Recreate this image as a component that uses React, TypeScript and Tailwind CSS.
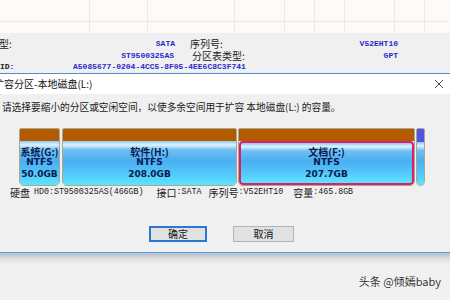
import React from "react";

const CJK = "font-['Noto_Sans_CJK_SC','Noto_Sans',sans-serif]";
const MONO = "font-['Liberation_Mono','DejaVu_Sans_Mono',monospace]";

const blueFill =
  "bg-[linear-gradient(to_bottom,#8ccaf2_0%,#dff3ff_9%,#6fbff4_20%,#4aaef2_45%,#52c6f9_72%,#5ce4ff_100%)]";

function PartText({ name, fs, size }: { name: string; fs: string; size: string }) {
  return (
    <div className="flex flex-col items-center justify-center leading-[11.5px] text-[#0b1a4e]">
      <span className={`${CJK} text-[10px] font-bold`}>{name}</span>
      <span className="font-['DejaVu_Sans',sans-serif] text-[9px] font-bold">{fs}</span>
      <span className="font-['DejaVu_Sans',sans-serif] text-[9px] font-bold">{size}</span>
    </div>
  );
}

export default function App() {
  const cols = [90, 58, 87, 50, 30, 30, 50, 30];
  return (
    <div className="w-[450px] h-[300px] overflow-hidden bg-[#f0f0f0] flex flex-col">
      {/* top grid */}
      <div className="h-[33px] flex bg-[#fdfbfa] shrink-0">
        {cols.map((w, i) => (
          <div key={i} style={{ width: w }} className="border-r border-[#efe9e6] h-full">
            <div className="h-[22px] border-b border-[#efe9e6]" />
          </div>
        ))}
        <div className="flex-1">
          <div className="h-[22px] border-b border-[#efe9e6]" />
        </div>
      </div>

      {/* info panel */}
      <div className="h-[40px] shrink-0 bg-[#f0f0f0] pt-[5px] flex flex-col leading-none">
        <div className="h-[12px] flex items-center">
          <div className="w-[175px] flex justify-between items-center">
            <span className={`${CJK} text-[10px] leading-none text-[#222] -ml-[1px]`}>型:</span>
            <span className={`${MONO} text-[8px] font-bold text-[#2a2ac8]`}>SATA</span>
          </div>
          <div className="w-[15px]" />
          <div className="w-[208px] flex justify-between items-center">
            <span className={`${CJK} text-[10px] leading-none text-[#222]`}>序列号:</span>
            <span className={`${MONO} text-[8px] font-bold text-[#2a2ac8]`}>V52EHT10</span>
          </div>
        </div>
        <div className="h-[12px] flex items-center">
          <div className="w-[174px] flex justify-end items-center">
            <span className={`${MONO} text-[8px] font-bold text-[#2a2ac8]`}>ST9500325AS</span>
          </div>
          <div className="w-[18px]" />
          <div className="w-[206px] flex justify-between items-center">
            <span className={`${CJK} text-[10px] leading-none text-[#222]`}>分区表类型:</span>
            <span className={`${MONO} text-[8px] font-bold text-[#2a2ac8]`}>GPT</span>
          </div>
        </div>
        <div className="h-[12px] flex items-center">
          <span className={`${MONO} text-[8px] font-bold text-[#222] w-[73px]`}>ID:</span>
          <span className={`${MONO} text-[8px] font-bold text-[#2a2ac8]`}>A5085677-0204-4CC5-8F05-4EE6C8C3F741</span>
        </div>
      </div>

      {/* dialog */}
      <div className="shrink-0 border-t border-[#4a90d9] flex flex-col">
        <div className="h-[20px] bg-white flex items-center justify-between pr-[5px]">
          <span className={`${CJK} text-[10px] text-[#111] -ml-[6px] leading-none`}>扩容分区-本地磁盘(L:)</span>
          <svg width="10" height="10" viewBox="0 0 10 10" className="mr-[1px]">
            <path d="M1 1 L9 9 M9 1 L1 9" stroke="#333" strokeWidth="0.9" fill="none" />
          </svg>
        </div>
        <div className="h-[158px] bg-[#f0f0f0] flex flex-col">
          <div className={`h-[28px] flex items-center pl-[2px] ${CJK} text-[9.7px] text-[#1a1a1a] leading-none whitespace-nowrap`}>
            请选择要缩小的分区或空闲空间，以使多余空间用于扩容 本地磁盘(L:) 的容量。
          </div>
          <div className="h-[6px]" />
          {/* partition bar */}
          <div className="h-[58px] flex pl-[19px]">
            <div className="w-[41px] flex flex-col border border-[#a8a890] rounded-t-[2px] rounded-b-[5px] overflow-hidden">
              <div className="h-[12px] bg-[#b35b00]" />
              <div className={`flex-1 ${blueFill} flex items-center justify-center`}>
                <PartText name="系统(G:)" fs="NTFS" size="50.0GB" />
              </div>
            </div>
            <div className="w-[2px]" />
            <div className="w-[175px] flex flex-col border border-[#a8a890] rounded-t-[2px] rounded-b-[5px] overflow-hidden">
              <div className="h-[12px] bg-[#b35b00]" />
              <div className={`flex-1 ${blueFill} flex items-center justify-center`}>
                <PartText name="软件(H:)" fs="NTFS" size="208.0GB" />
              </div>
            </div>
            <div className="w-[1px]" />
            <div className="w-[177px] flex flex-col border border-[#a8a890] rounded-t-[2px] rounded-b-[5px] overflow-hidden bg-[#b35b00]">
              <div className="h-[12px] bg-[#b35b00]" />
              <div className="flex-1 bg-[#f0f0f0] flex">
                <div className={`flex-1 ${blueFill} border-2 border-[#dc1f6c] rounded-[4px] flex items-center justify-center`}>
                  <PartText name="文档(F:)" fs="NTFS" size="207.7GB" />
                </div>
              </div>
            </div>
            <div className="w-[1px]" />
            <div className="w-[9px] flex flex-col border border-[#a8a890] rounded-t-[2px] rounded-b-[5px] overflow-hidden">
              <div className="h-[13px] bg-[#5454e4]" />
              <div className={`flex-1 ${blueFill}`} />
            </div>
          </div>
          {/* disk info line */}
          <div className="h-[13px] flex items-center pl-[10px] text-[#1a1a1a] whitespace-nowrap leading-none">
            <span className={`${CJK} text-[10px]`}>硬盘</span>
            <span className={`${MONO} text-[8.3px] ml-[4px]`}>HD0:ST9500325AS(466GB)</span>
            <span className={`${CJK} text-[10px] ml-[13px]`}>接口</span>
            <span className={`${MONO} text-[8.3px]`}>:SATA</span>
            <span className={`${CJK} text-[10px] ml-[7px]`}>序列号</span>
            <span className={`${MONO} text-[8.3px]`}>:V52EHT10</span>
            <span className={`${CJK} text-[10px] ml-[10px]`}>容量</span>
            <span className={`${MONO} text-[8.3px]`}>:465.8GB</span>
          </div>
          <div className="h-[27px]" />
          {/* buttons */}
          <div className="h-[16px] flex pl-[149px]">
            <div className={`w-[58px] h-[16px] border-2 border-[#2b78d4] bg-[#e1e1e1] flex items-center justify-center ${CJK} text-[10px] text-[#111] leading-none`}>
              确定
            </div>
            <div className="w-[26px]" />
            <div className={`w-[61px] h-[16px] border border-[#b4b4b4] bg-[#e1e1e1] flex items-center justify-center ${CJK} text-[10px] text-[#111] leading-none`}>
              取消
            </div>
          </div>
          <div className="h-[1px]" />
          <div className="flex-1 bg-[#eff1f4]" />
        </div>
        <div className="h-[1px] bg-[#5a9cdc]" />
        <div className="h-[2px] bg-[#b9c6d3]" />
      </div>

      {/* below dialog */}
      <div className="flex-1 flex flex-col bg-[linear-gradient(to_bottom,#c9c9c9_0px,#e6e6e6_5px,#f0f0f0_10px,#f1f1f1_100%)]">
        <div className="flex-1" />
        <div className="h-[24px] flex items-start justify-end pr-[9px]">
          <span className={`${CJK} text-[11px] text-[#333] leading-none [text-shadow:0_0_2px_#fff]`}>头条 @倾嫣baby</span>
        </div>
      </div>
    </div>
  );
}
